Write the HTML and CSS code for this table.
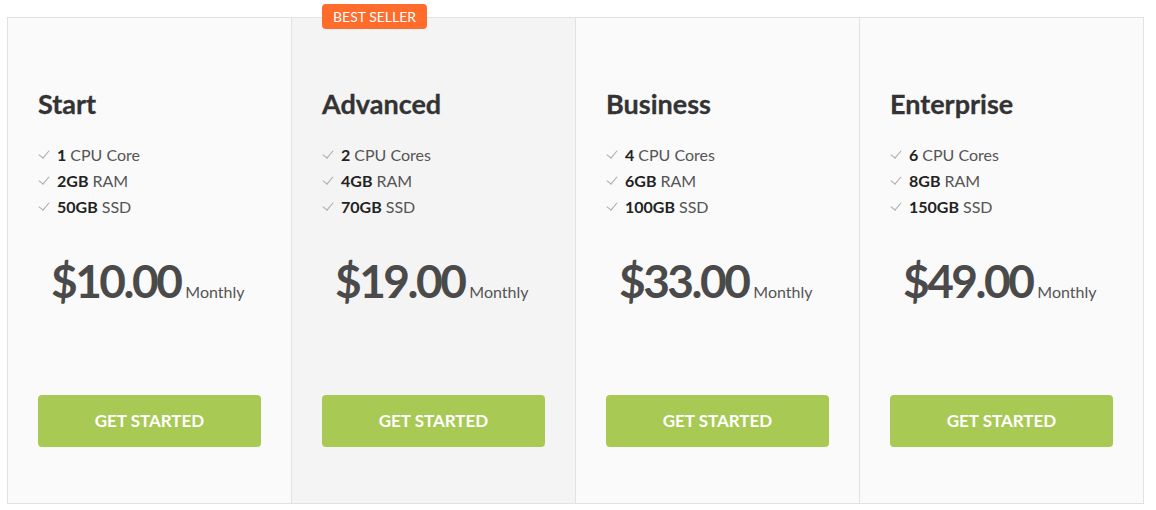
FILE: index.html
```html
<!DOCTYPE html>
<html>
<head>
<meta charset="utf-8">
<link rel="stylesheet" href="styles.css">
</head>
<body>
<div class="pricing">
  <div class="plan">
    <h2 class="plan-title">Start</h2>
    <ul class="features">
      <li><span class="check"></span><b>1</b> CPU Core</li>
      <li><span class="check"></span><b>2GB</b> RAM</li>
      <li><span class="check"></span><b>50GB</b> SSD</li>
    </ul>
    <div class="price"><span class="amount">$10.00</span><span class="period">Monthly</span></div>
    <a class="btn">GET STARTED</a>
  </div>
  <div class="plan featured">
    <span class="badge">BEST SELLER</span>
    <h2 class="plan-title">Advanced</h2>
    <ul class="features">
      <li><span class="check"></span><b>2</b> CPU Cores</li>
      <li><span class="check"></span><b>4GB</b> RAM</li>
      <li><span class="check"></span><b>70GB</b> SSD</li>
    </ul>
    <div class="price"><span class="amount">$19.00</span><span class="period">Monthly</span></div>
    <a class="btn">GET STARTED</a>
  </div>
  <div class="plan">
    <h2 class="plan-title">Business</h2>
    <ul class="features">
      <li><span class="check"></span><b>4</b> CPU Cores</li>
      <li><span class="check"></span><b>6GB</b> RAM</li>
      <li><span class="check"></span><b>100GB</b> SSD</li>
    </ul>
    <div class="price"><span class="amount">$33.00</span><span class="period">Monthly</span></div>
    <a class="btn">GET STARTED</a>
  </div>
  <div class="plan">
    <h2 class="plan-title">Enterprise</h2>
    <ul class="features">
      <li><span class="check"></span><b>6</b> CPU Cores</li>
      <li><span class="check"></span><b>8GB</b> RAM</li>
      <li><span class="check"></span><b>150GB</b> SSD</li>
    </ul>
    <div class="price"><span class="amount">$49.00</span><span class="period">Monthly</span></div>
    <a class="btn">GET STARTED</a>
  </div>
</div>
</body>
</html>
```
FILE: styles.css
```css
* { box-sizing: border-box; }
body {
  margin: 0;
  background: #fff;
  font-family: Lato, "Open Sans", sans-serif;
  color: #555;
}
.pricing {
  display: grid;
  grid-template-columns: repeat(4, 284px);
  width: 1137px;
  margin: 17px 0 0 7px;
  border: 1px solid #e2e2e2;
  border-left: none;
}
.plan {
  position: relative;
  background: #fafafa;
  border-left: 1px solid #e2e2e2;
  padding: 71px 30px 56px 30px;
  display: flex;
  flex-direction: column;
}
.plan.featured { background: #f4f4f4; }
.badge {
  position: absolute;
  top: -14px;
  left: 30px;
  background: #ff6c2c;
  color: #fff;
  font-size: 14px;
  line-height: 25px;
  height: 25px;
  padding: 0 11px;
  border-radius: 4px;
}
.plan-title {
  margin: 0;
  font-size: 27px;
  line-height: 30px;
  font-weight: 700;
  color: #333;
  -webkit-text-stroke: 0.3px #333;
}
.features {
  list-style: none;
  margin: 23px 0 0 0;
  padding: 0;
  font-size: 16px;
  line-height: 26px;
  color: #555;
}
.features li { display: flex; align-items: center; }
.features b { color: #222; margin-right: 4px; font-weight: 700; }
.check {
  width: 6px;
  height: 10px;
  border: solid #aaa;
  border-width: 0 1.5px 1.5px 0;
  transform: rotate(40deg);
  margin: -4px 10px 0 3px;
}
.price {
  display: flex;
  align-items: baseline;
  margin: 33px 0 0 13px;
}
.amount {
  font-size: 46px;
  line-height: 56px;
  font-weight: 700;
  color: #4a4a4a;
  letter-spacing: -2.5px;
}
.period {
  font-size: 16px;
  margin-left: 5px;
  color: #555;
}
.btn {
  display: block;
  margin-top: 86px;
  height: 52px;
  line-height: 52px;
  background: #a8ca55;
  color: #fff;
  text-align: center;
  font-size: 17px;
  font-weight: 700;
  border-radius: 4px;
}
```
